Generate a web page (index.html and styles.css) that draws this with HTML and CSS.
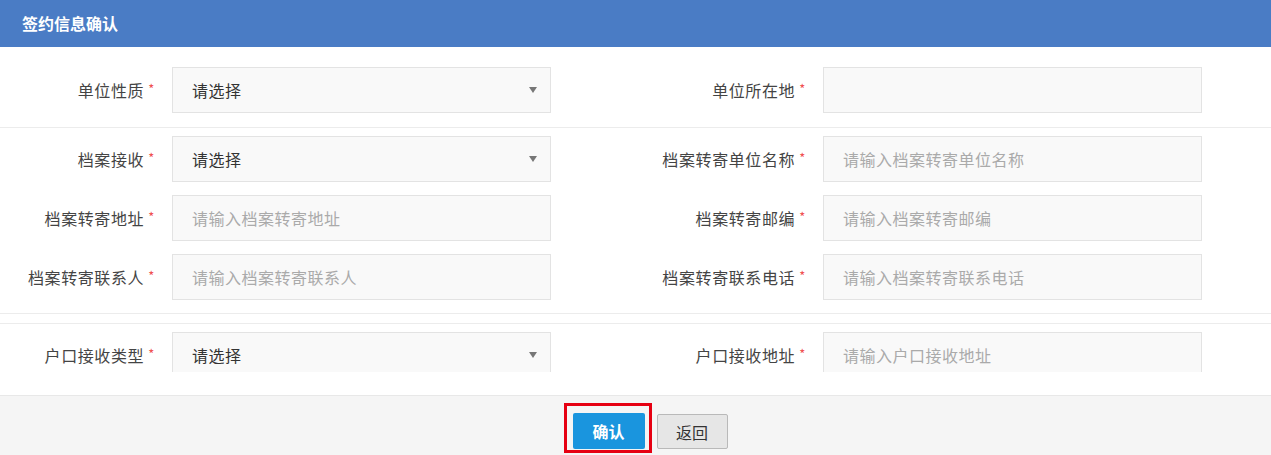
FILE: index.html
```html
<!DOCTYPE html>
<html lang="zh-CN">
<head>
  <meta charset="UTF-8" />
  <title>签约信息确认</title>
  <link rel="stylesheet" href="styles.css">
</head>
<body>

  <div class="dialog">
    <div class="dialog-head">签约信息确认</div>

    <div class="dialog-body">
      <section class="form-group first">
        <div class="form-row">
          <div class="field">
            <label>单位性质 <em>*</em></label>
            <div class="select"><span>请选择</span><i class="arrow"></i></div>
          </div>
          <div class="field">
            <label>单位所在地 <em>*</em></label>
            <input type="text" />
          </div>
        </div>
      </section>

      <section class="form-group">
        <div class="form-row">
          <div class="field">
            <label>档案接收 <em>*</em></label>
            <div class="select"><span>请选择</span><i class="arrow"></i></div>
          </div>
          <div class="field">
            <label>档案转寄单位名称 <em>*</em></label>
            <input type="text" placeholder="请输入档案转寄单位名称" />
          </div>
        </div>
        <div class="form-row">
          <div class="field">
            <label>档案转寄地址 <em>*</em></label>
            <input type="text" placeholder="请输入档案转寄地址" />
          </div>
          <div class="field">
            <label>档案转寄邮编 <em>*</em></label>
            <input type="text" placeholder="请输入档案转寄邮编" />
          </div>
        </div>
        <div class="form-row">
          <div class="field">
            <label>档案转寄联系人 <em>*</em></label>
            <input type="text" placeholder="请输入档案转寄联系人" />
          </div>
          <div class="field">
            <label>档案转寄联系电话 <em>*</em></label>
            <input type="text" placeholder="请输入档案转寄联系电话" />
          </div>
        </div>
      </section>

      <section class="form-group last">
        <div class="form-row">
          <div class="field">
            <label>户口接收类型 <em>*</em></label>
            <div class="select"><span>请选择</span><i class="arrow"></i></div>
          </div>
          <div class="field">
            <label>户口接收地址 <em>*</em></label>
            <input type="text" placeholder="请输入户口接收地址" />
          </div>
        </div>
      </section>
    </div>

    <div class="dialog-foot">
      <span class="highlight"><button class="btn btn-primary">确认</button></span>
      <button class="btn btn-default">返回</button>
    </div>
  </div>

</body>
</html>
```

FILE: styles.css
```css
* {
  box-sizing: border-box;
}
body {
  margin: 0;
  font-family: "Noto Sans CJK SC", "Liberation Sans", sans-serif;
  font-size: 16px;
  color: #333;
  background: #fff;
}

/* Header */
.dialog-head {
  height: 47px;
  line-height: 46px;
  padding-left: 22px;
  background-color: #4a7cc5;
  color: #fff;
  font-size: 16px;
  font-weight: 700;
}

/* Form body, clipped like a scroll area */
.dialog-body {
  height: 325px;
  overflow: hidden;
}
.form-group {
  padding: 8px 0 13px;
  border-bottom: 1px solid #ececec;
  display: flex;
  flex-direction: column;
  gap: 13px;
}
.form-group.first {
  padding-top: 20px;
  padding-bottom: 14px;
}
.form-group.last {
  border-bottom: none;
  border-top: 1px solid #ececec;
  margin-top: 9px;
}

.form-row {
  display: grid;
  grid-template-columns: 651px 1fr;
}
.field {
  display: flex;
  align-items: center;
}
.field label {
  flex: 0 0 172px;
  padding-right: 17px;
  text-align: right;
  color: #444;
  letter-spacing: 0.6px;
  white-space: nowrap;
}
.field label em {
  font-style: normal;
  color: #f05050;
  font-size: 13px;
  vertical-align: 3px;
}
.field input,
.field .select {
  flex: 0 0 379px;
  width: 379px;
  height: 46px;
  border: 1px solid #e3e3e3;
  background-color: #f9f9f9;
  padding: 0 19px;
  font-family: inherit;
  font-size: 16px;
  color: #333;
  outline: none;
}
.field input::placeholder {
  color: #aaa;
  letter-spacing: 0.5px;
}
.field .select {
  display: flex;
  align-items: center;
  justify-content: space-between;
  letter-spacing: 0.5px;
}
.select .arrow {
  width: 0;
  height: 0;
  margin-right: -6px;
  border-left: 4px solid transparent;
  border-right: 4px solid transparent;
  border-top: 6px solid #777;
}

/* Footer */
.dialog-foot {
  margin-top: 23px;
  height: 60px;
  border-top: 1px solid #e8e8e8;
  background-color: #f5f5f5;
  display: flex;
  justify-content: center;
  align-items: flex-start;
  padding: 7px 0 0 20px;
  gap: 5px;
}
.highlight {
  display: inline-block;
  border: 3px solid #e60012;
  padding: 7px 4px 1px 6px;
}
.btn {
  font-family: inherit;
  font-size: 16px;
  border-radius: 2px;
  cursor: pointer;
}
.btn-primary {
  display: block;
  width: 72px;
  height: 36px;
  border: none;
  background-color: #1a95de;
  color: #fff;
  font-weight: 700;
}
.btn-default {
  margin-top: 11px;
  width: 71px;
  height: 35px;
  border: 1px solid #b9b9b9;
  background-color: #e6e6e6;
  color: #333;
}
```
